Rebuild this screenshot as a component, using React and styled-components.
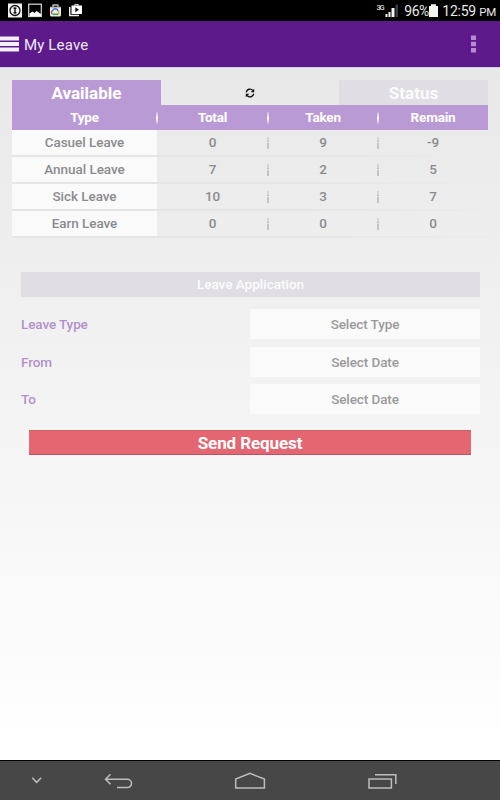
import * as React from "react";
import styled, { createGlobalStyle } from "styled-components";

const colors = {
  bar: "#5c1a8b",
  lilac: "#ba9ad5",
  muted: "#e0dee3",
  text: "#8b8b8e",
  danger: "#e36671",
};

const GlobalStyle = createGlobalStyle`
  * {
    box-sizing: border-box;
  }

  body {
    margin: 0;
    font-family: Roboto, sans-serif;
  }
`;

const Screen = styled.div`
  display: flex;
  flex-direction: column;
  width: 500px;
  height: 800px;
  overflow: hidden;
  background: #fff;
`;

const StatusBar = styled.header`
  display: flex;
  justify-content: space-between;
  height: 21px;
  padding: 0 4px 0 7px;
  background: #000;
  color: #e8e8e8;
`;

const Notifications = styled.div`
  display: flex;
  align-items: center;

  svg {
    display: block;
  }
`;

const SystemInfo = styled.div`
  display: flex;
  align-items: center;
  font-size: 14px;
  line-height: 21px;

  svg {
    display: block;
  }
`;

const Percent = styled.span`
  width: 25px;
  margin-left: 5px;
  padding-top: 1px;
  font-size: 14px;
  letter-spacing: -0.5px;
  white-space: nowrap;
`;

const Clock = styled.span`
  margin-left: 4px;
  padding-top: 2px;
  font-size: 14px;
  letter-spacing: -0.25px;
  white-space: nowrap;

  small {
    font-size: 11.5px;
  }
`;

const AppBar = styled.div`
  display: flex;
  align-items: center;
  height: 46px;
  padding-right: 24px;
  background: ${colors.bar};
  color: #f1e8f7;

  svg {
    display: block;
  }
`;

const AppTitle = styled.h1`
  flex: 1;
  margin: 1px 0 0 5px;
  font-size: 15px;
  font-weight: 400;
  line-height: 20px;
  letter-spacing: 0.15px;
`;

const Content = styled.main`
  flex: 1;
  padding: 12px 12px 0;
  border-top: 1px solid #d9cfe2;
  background: linear-gradient(#e8e8e9, #eeeeee 25%, #f5f5f5 56%, #fff 98%);
`;

const Tabs = styled.div`
  display: grid;
  grid-template-columns: 149px 1fr 149px;
  height: 25px;
`;

const Tab = styled.button`
  padding: 1px 0 0;
  border: 0;
  background: ${({ $active }) => ($active ? colors.lilac : colors.muted)};
  color: ${({ $active }) => ($active ? "#fff" : "#fbfbfc")};
  font: 700 17px/24px Roboto, sans-serif;
`;

const RefreshButton = styled.button`
  display: flex;
  align-items: center;
  justify-content: center;
  padding: 0;
  border: 0;
  background: none;
`;

const TableRow = styled.div`
  display: grid;
  grid-template-columns: 145px 111px 110px 110px;
  height: 27px;
  color: ${colors.text};
  font-size: 13.5px;
  font-weight: 500;
  line-height: 25px;
  letter-spacing: -0.05px;
  text-align: center;
  border-bottom: 2px solid;
  border-image: linear-gradient(90deg, #e5e5e6 60%, #ececec) 1;
`;

const TableHead = styled(TableRow)`
  height: 25px;
  border: 0;
  background: ${colors.lilac};
  color: #fff;
  font-weight: 700;
  letter-spacing: -0.2px;
`;

const Cell = styled.div`
  display: grid;
  grid-template-columns: 1fr 1px;
  align-items: center;
  padding-left: 1px;
  background: ${({ $label }) => ($label ? "#fafafb" : "transparent")};
`;

const Divider = styled.i`
  width: 1.5px;
  height: 12px;
  background: ${({ $light }) =>
    $light
      ? "linear-gradient(#ffffff33, #fff 50%, #ffffff33)"
      : "linear-gradient(#d5d5d5 30%, #bdbdbd 30% 44%, #e5e5e5 44% 50%, #c4c4c4 50%)"};
`;

const Form = styled.form`
  padding: 34px 8px 0 9px;
`;

const FormHeading = styled.h2`
  height: 25px;
  margin: 0 0 12px;
  background: ${colors.muted};
  color: #fbfbfc;
  font-size: 13.5px;
  font-weight: 500;
  line-height: 25px;
  text-align: center;
`;

const Field = styled.label`
  display: grid;
  grid-template-columns: 229px 1fr;
  height: 30px;
  margin-bottom: 7.5px;
  color: #b191cb;
  font-size: 13.5px;
  font-weight: 500;
  line-height: 30px;
  letter-spacing: -0.1px;
`;

const Picker = styled.span`
  background: #fafafa;
  color: #9a9a9b;
  text-align: center;
`;

const SendButton = styled.button`
  display: block;
  width: 442px;
  height: 25px;
  margin: 16px 0 0 8px;
  padding: 1px 0 0;
  border: 0;
  border-top: 1px solid #c9606b;
  border-bottom: 1px solid #bd5262;
  background: ${colors.danger};
  color: #fff;
  font: 700 17px/22px Roboto, sans-serif;
  letter-spacing: -0.1px;
`;

const NavBar = styled.nav`
  height: 40px;
  border-top: 1px solid #000;
  background: #474747;

  svg {
    display: block;
  }
`;

const leaves = [
  { type: "Casuel Leave", total: 0, taken: 9, remain: -9 },
  { type: "Annual Leave", total: 7, taken: 2, remain: 5 },
  { type: "Sick Leave", total: 10, taken: 3, remain: 7 },
  { type: "Earn Leave", total: 0, taken: 0, remain: 0 },
];

const fields = [
  { label: "Leave Type", value: "Select Type" },
  { label: "From", value: "Select Date" },
  { label: "To", value: "Select Date" },
];

function NotificationIcons() {
  return (
    <svg width="76" height="21" viewBox="0 0 76 21" fill="none">
      <rect x="1" y="3.5" width="14" height="14" fill="#f2f2f2" />
      <circle cx="8" cy="10.5" r="5" stroke="#111" strokeWidth="1.3" />
      <path d="M8 7.2v6.6M6.6 8.2h2.8M6.6 12.8h2.8" stroke="#111" strokeWidth="1.4" />
      <rect x="21.7" y="4.2" width="12.6" height="12.3" stroke="#ddd" strokeWidth="1.2" />
      <path d="M22.5 16v-2.5l3-2 2 1.5 2-2 4.5 3V16z" fill="#fff" />
      <path d="M43 7.5V15q0 1.5 1.5 1.5h8q1.5 0 1.5-1.5V7.5z" fill="#eee" />
      <path d="M43 7.5h11M46 7V5h5v2" stroke="#bbb" strokeWidth="1.3" />
      <path d="M45.5 14a1.8 1.8 0 0 1 0-3.3" stroke="#e34f43" strokeWidth="1.5" />
      <path d="M45.5 11a2.9 2.9 0 0 1 5.6 0" stroke="#3a78cd" strokeWidth="1.5" />
      <path d="M51 11a1.8 1.8 0 0 1 0 3.3" stroke="#edb42e" strokeWidth="1.5" />
      <path d="M45.5 14.3h5.7" stroke="#35a05d" strokeWidth="1.5" />
      <path d="M62.7 7v8.5H72" stroke="#eee" strokeWidth="1.4" />
      <path d="M64.5 5.5h3V4h4v1.5H75V14H64.5z" fill="#fff" />
      <path d="M68.3 4.7h2.4v.8h-2.4zM68.3 7.2v5l3.7-2.5z" fill="#111" />
    </svg>
  );
}

function SignalIcon() {
  return (
    <svg width="23" height="21" viewBox="0 0 23 21">
      <text x="0.5" y="9.5" fill="#ddd" fontSize="7.5" fontWeight="500" textLength="8">3G</text>
      <path d="M9.5 14h2v3h-2zM12.5 12h2v5h-2zM15.5 8h3v9h-3z" fill="#f5f5f5" />
      <path d="M19.5 4.5h2.5V17h-2.5z" fill="#3c3c3c" />
    </svg>
  );
}

function BatteryIcon() {
  return (
    <svg width="9" height="21" viewBox="0 0 9 21">
      <path d="M0 6h2V4.2h5V6h2v11H0z" fill="#f5f5f5" />
    </svg>
  );
}

function MenuIcon() {
  return (
    <svg width="19" height="18" viewBox="0 0 19 18">
      <path d="M0 1.5h19v4H0zM0 7h19v4H0zM0 12.5h19v4H0z" fill="#f4effa" />
    </svg>
  );
}

function MoreIcon() {
  return (
    <svg width="5" height="18" viewBox="0 0 5 18">
      <path d="M0 0.5h5v4.5H0zM0 6.7h5v4.5H0zM0 13h5v4.5H0z" fill="#b68bd4" />
    </svg>
  );
}

function RefreshIcon() {
  return (
    <svg width="10" height="10" viewBox="0 0 10 10" fill="none" stroke="#111" strokeWidth="1.4">
      <path d="M1.2 4.3A3.8 3.8 0 0 1 7.8 2.4M8.8 5.7A3.8 3.8 0 0 1 2.2 7.6" />
      <path d="M9.2 0.7v3.6H5.6zM0.8 9.3V5.7h3.6z" fill="#111" stroke="none" />
    </svg>
  );
}

function NavIcons() {
  return (
    <svg width="500" height="39" viewBox="0 0 500 39" fill="none" stroke="#bdbdbd" strokeWidth="1.5">
      <path d="M32.3 16.7l4.3 4.6 4.6-4.6" />
      <path d="M110.5 13.2l-5 5 5 5M106 18.2h21.3a4.2 4.2 0 0 1 0 8.4H117" />
      <path d="M235.7 26.9V18L250 12.4 264.4 18v8.9z" />
      <path d="M369 18h22.4v8.9H369zM375 13.8h20.8V23" />
    </svg>
  );
}

function App() {
  return (
    <>
      <GlobalStyle />
      <Screen>
        <StatusBar>
          <Notifications>
            <NotificationIcons />
          </Notifications>
          <SystemInfo>
            <SignalIcon />
            <Percent>96%</Percent>
            <BatteryIcon />
            <Clock>12:59 <small>PM</small></Clock>
          </SystemInfo>
        </StatusBar>
        <AppBar>
          <MenuIcon />
          <AppTitle>My Leave</AppTitle>
          <MoreIcon />
        </AppBar>
        <Content>
          <Tabs>
            <Tab $active>Available</Tab>
            <RefreshButton aria-label="Refresh">
              <RefreshIcon />
            </RefreshButton>
            <Tab>Status</Tab>
          </Tabs>
          <TableHead>
            {["Type", "Total", "Taken", "Remain"].map((title, index) => (
              <Cell key={title}>
                {title}
                {index < 3 && <Divider $light />}
              </Cell>
            ))}
          </TableHead>
          {leaves.map((leave) => (
            <TableRow key={leave.type}>
              <Cell $label>{leave.type}</Cell>
              <Cell>{leave.total}<Divider /></Cell>
              <Cell>{leave.taken}<Divider /></Cell>
              <Cell>{leave.remain}</Cell>
            </TableRow>
          ))}
          <Form>
            <FormHeading>Leave Application</FormHeading>
            {fields.map((field) => (
              <Field key={field.label}>
                {field.label}
                <Picker>{field.value}</Picker>
              </Field>
            ))}
            <SendButton type="button">Send Request</SendButton>
          </Form>
        </Content>
        <NavBar>
          <NavIcons />
        </NavBar>
      </Screen>
    </>
  );
}

export default App;
